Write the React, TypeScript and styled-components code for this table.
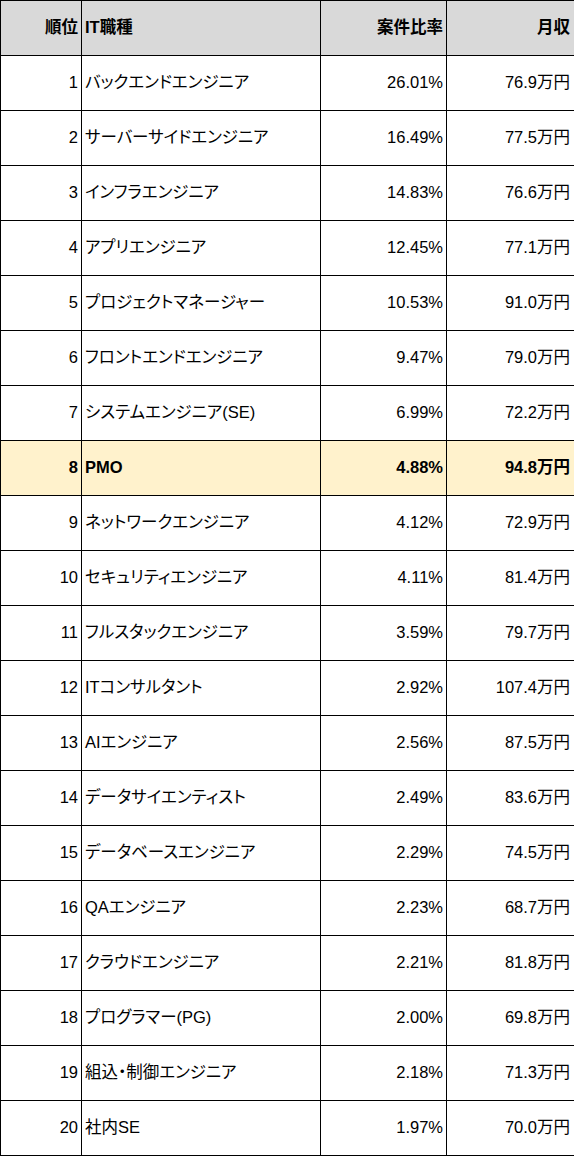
import React from 'react'
import styled, { createGlobalStyle } from 'styled-components'

const GlobalStyle = createGlobalStyle`
  html, body {
    margin: 0;
    padding: 0;
    background: #ffffff;
    overflow: hidden;
  }
  body {
    font-family: 'Liberation Sans', Arial, 'Noto Sans CJK JP', sans-serif;
    color: #000;
  }
`

const Table = styled.div`
  display: grid;
  grid-template-columns: 81px 239px 126px 127px;
  grid-auto-rows: 55px;
  width: 574px;
  border-top: 1px solid #000;
  border-left: 1px solid #000;
  box-sizing: border-box;
`

const Cell = styled.div<{ $align?: 'left' | 'right'; $head?: boolean; $hl?: boolean; $last?: boolean }>`
  display: flex;
  align-items: center;
  justify-content: ${({ $align }) => ($align === 'left' ? 'flex-start' : 'flex-end')};
  box-sizing: border-box;
  padding: 0 ${({ $last }) => ($last ? '4px' : '3px')} 1px 3px;
  border-bottom: 1px solid #000;
  border-right: ${({ $last }) => ($last ? 'none' : '1px solid #000')};
  background: ${({ $head, $hl }) => ($head ? '#d9d9d9' : $hl ? '#fff2cc' : '#ffffff')};
  font-size: 16.5px;
  line-height: 1;
  font-weight: ${({ $head, $hl }) => ($head || $hl ? 700 : 400)};
  font-feature-settings: 'palt';
  white-space: nowrap;
  overflow: hidden;
`

type Job = { name: string; ratio: string; pay: string }

const jobs: Job[] = [
  { name: 'バックエンドエンジニア', ratio: '26.01%', pay: '76.9万円' },
  { name: 'サーバーサイドエンジニア', ratio: '16.49%', pay: '77.5万円' },
  { name: 'インフラエンジニア', ratio: '14.83%', pay: '76.6万円' },
  { name: 'アプリエンジニア', ratio: '12.45%', pay: '77.1万円' },
  { name: 'プロジェクトマネージャー', ratio: '10.53%', pay: '91.0万円' },
  { name: 'フロントエンドエンジニア', ratio: '9.47%', pay: '79.0万円' },
  { name: 'システムエンジニア(SE)', ratio: '6.99%', pay: '72.2万円' },
  { name: 'PMO', ratio: '4.88%', pay: '94.8万円' },
  { name: 'ネットワークエンジニア', ratio: '4.12%', pay: '72.9万円' },
  { name: 'セキュリティエンジニア', ratio: '4.11%', pay: '81.4万円' },
  { name: 'フルスタックエンジニア', ratio: '3.59%', pay: '79.7万円' },
  { name: 'ITコンサルタント', ratio: '2.92%', pay: '107.4万円' },
  { name: 'AIエンジニア', ratio: '2.56%', pay: '87.5万円' },
  { name: 'データサイエンティスト', ratio: '2.49%', pay: '83.6万円' },
  { name: 'データベースエンジニア', ratio: '2.29%', pay: '74.5万円' },
  { name: 'QAエンジニア', ratio: '2.23%', pay: '68.7万円' },
  { name: 'クラウドエンジニア', ratio: '2.21%', pay: '81.8万円' },
  { name: 'プログラマー(PG)', ratio: '2.00%', pay: '69.8万円' },
  { name: '組込・制御エンジニア', ratio: '2.18%', pay: '71.3万円' },
  { name: '社内SE', ratio: '1.97%', pay: '70.0万円' },
]

// 8位 (PMO) is the highlighted row
const HIGHLIGHT = 8

export default function App() {
  return (
    <>
      <GlobalStyle />
      <Table>
        <Cell $head>順位</Cell>
        <Cell $head $align="left">IT職種</Cell>
        <Cell $head>案件比率</Cell>
        <Cell $head $last>月収</Cell>
        {jobs.map((job, i) => {
          const rank = i + 1
          const hl = rank === HIGHLIGHT
          return (
            <React.Fragment key={job.name}>
              <Cell $hl={hl}>{rank}</Cell>
              <Cell $hl={hl} $align="left">{job.name}</Cell>
              <Cell $hl={hl}>{job.ratio}</Cell>
              <Cell $hl={hl} $last>{job.pay}</Cell>
            </React.Fragment>
          )
        })}
      </Table>
    </>
  )
}
